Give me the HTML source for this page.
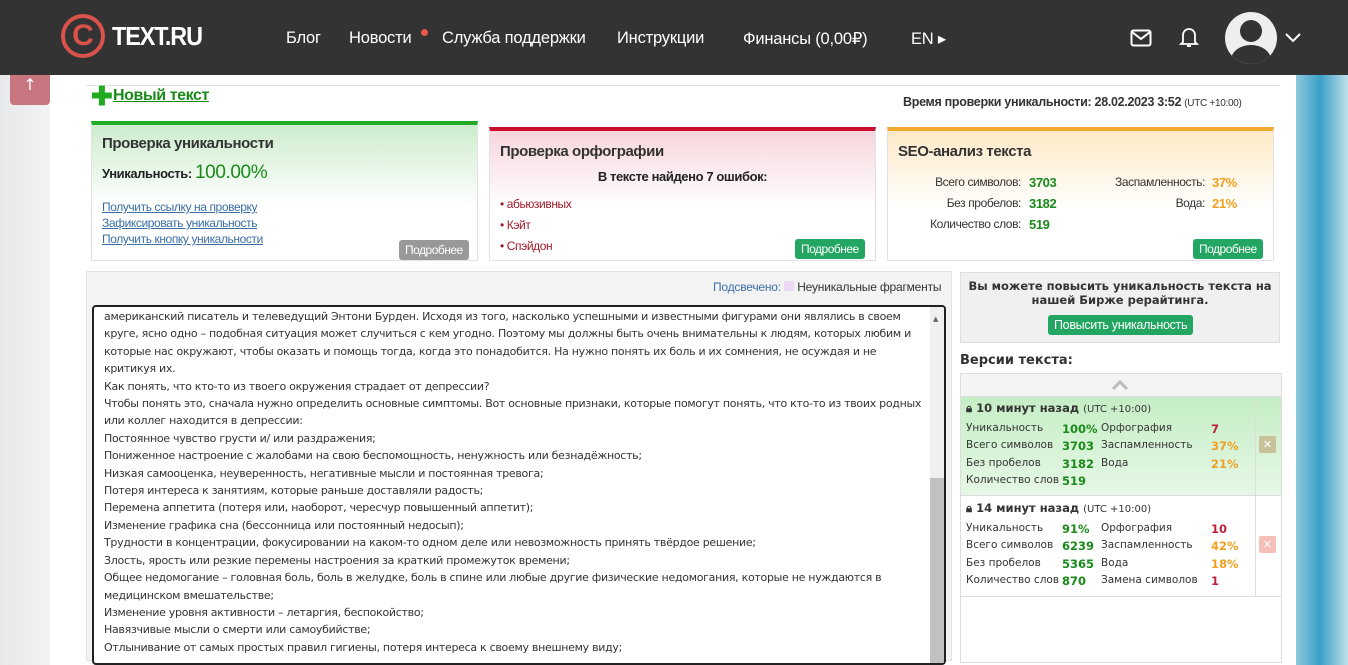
<!DOCTYPE html>
<html><head><meta charset="utf-8"><style>
*{box-sizing:border-box;margin:0;padding:0}
body{width:1348px;height:652px;overflow:hidden;position:relative;font-family:"DejaVu Sans","Liberation Sans",sans-serif;background:linear-gradient(90deg,#e6e8ea 0,#f2f3f4 50px,#fff 50px,#fff 1296px,#8ec8dc 1296px,#3aa0c8 1320px,#bfe0ea 1348px)}
.hdr{position:absolute;left:0;top:0;width:1348px;height:75px;background:#333;color:#fff;font-family:"Liberation Sans",sans-serif}
.hdr .n{position:absolute;top:29px;font-size:16.5px;letter-spacing:-0.2px}
.logo{position:absolute;left:61px;top:14px;width:44px;height:44px;border:4px solid #d9534a;border-radius:50%;color:#d9534a;font:bold 30px/36px "Liberation Sans",sans-serif;text-align:center}
.a{position:absolute}
.nr{font-family:"Liberation Sans",sans-serif;letter-spacing:-0.4px}
.card{position:absolute;top:121px;height:140px;border:1px solid #e2e2e2;font-family:"Liberation Sans",sans-serif}
.btn{position:absolute;background:#22a661;color:#fff;font-size:12px;padding:3px 6px;border-radius:3px;font-family:"Liberation Sans",sans-serif;letter-spacing:-0.5px}
.ta{position:absolute;left:92px;top:305px;width:854px;height:360px;border:2px solid #222;border-radius:4px;font-size:11px;letter-spacing:-0.29px;line-height:17.4px;color:#333;padding:1px 14px 0 10px;overflow:hidden;white-space:nowrap}
.v{position:absolute;font-size:10.5px;color:#333}
.g{color:#1a8a1a;font-weight:bold}.o{color:#f0a020;font-weight:bold}.r{color:#c0203a;font-weight:bold}
</style></head><body>
<div class="hdr">
<div class="logo">C</div>
<div class="a" style="left:112px;top:21px;font:bold 26px 'Liberation Sans',sans-serif;letter-spacing:-1.2px;transform:scaleX(.9);transform-origin:left">TEXT.RU</div>
<div class="n" style="left:286px">Блог</div>
<div class="n" style="left:349px">Новости</div>
<div class="a" style="left:421px;top:29px;width:7px;height:7px;border-radius:50%;background:#e8584a"></div>
<div class="n" style="left:442px">Служба поддержки</div>
<div class="n" style="left:617px">Инструкции</div>
<div class="n" style="left:743px">Финансы (0,00₽)</div>
<div class="n" style="left:911px">EN ▸</div>
<svg class="a" style="left:1130px;top:29px" width="22" height="18" viewBox="0 0 22 18"><rect x="1.5" y="1.5" width="19" height="15" rx="2" fill="none" stroke="#fff" stroke-width="2"/><path d="M2 3l9 7 9-7" fill="none" stroke="#fff" stroke-width="2"/></svg>
<svg class="a" style="left:1179px;top:26px" width="20" height="22" viewBox="0 0 20 22"><path d="M4 16V9a6 6 0 0112 0v7l2 2H2z" fill="none" stroke="#fff" stroke-width="1.8"/><path d="M8 20h4" stroke="#fff" stroke-width="2"/></svg>
<div class="a" style="left:1225px;top:12px;width:52px;height:52px;border-radius:50%;background:#eee;overflow:hidden"><div class="a" style="left:15px;top:8px;width:22px;height:22px;border-radius:50%;background:#333"></div><div class="a" style="left:6px;top:33px;width:40px;height:30px;border-radius:50%;background:#333"></div></div>
<svg class="a" style="left:1285px;top:33px" width="16" height="10"><path d="M1 1l7 7 7-7" fill="none" stroke="#fff" stroke-width="2"/></svg>
</div>
<div class="a" style="left:10px;top:75px;width:40px;height:30px;background:#c97580;color:#fff;text-align:center;font-size:16px;border-radius:0 0 4px 4px">↑</div>
<div class="a" style="left:86px;top:85px;width:1194px;border-top:1px solid #e2e2e2"></div>
<div class="a" style="left:91px;top:85px;color:#1faa1f;font:bold 26px/22px sans-serif">✚</div>
<div class="a nr" style="left:113px;top:87px;color:#1a8a1a;font-weight:bold;font-size:16px;text-decoration:underline">Новый текст</div>
<div class="a nr" style="left:903px;top:95px;font-weight:bold;font-size:12.5px;color:#333;letter-spacing:-0.3px">Время проверки уникальности: 28.02.2023 3:52 <span style="font-weight:normal;font-size:10px">(UTC +10:00)</span></div>

<div class="card" style="left:91px;width:387px;border-top:4px solid #22aa22;background:linear-gradient(#cdeccd,#fff 60%)">
<div class="a nr" style="left:10px;top:10px;font-weight:bold;font-size:15px;color:#333">Проверка уникальности</div>
<div class="a nr" style="left:10px;top:37px;font-weight:bold;font-size:13px;color:#222">Уникальность: <span style="color:#1a8a1a;font-size:19px;font-weight:normal">100.00%</span></div>
<div class="a nr" style="left:10px;top:74px;font-size:12px;line-height:16px;color:#3a6ea5;text-decoration:underline">Получить ссылку на проверку<br>Зафиксировать уникальность<br>Получить кнопку уникальности</div>
<div class="btn" style="left:307px;top:115px;background:#999">Подробнее</div>
</div>
<div class="card" style="left:489px;width:387px;top:127px;height:134px;border-top:4px solid #c8102e;background:linear-gradient(#f7d6dc,#fff 60%)">
<div class="a nr" style="left:10px;top:12px;font-weight:bold;font-size:15px;color:#333">Проверка орфографии</div>
<div class="a nr" style="left:0;width:100%;text-align:center;top:38px;font-weight:bold;font-size:13px;color:#222">В тексте найдено 7 ошибок:</div>
<div class="a nr" style="left:10px;top:63px;font-size:12px;line-height:21px;color:#a01a2a">• абьюзивных<br>• Кэйт<br>• Спэйдон</div>
<div class="btn" style="left:305px;top:108px">Подробнее</div>
</div>
<div class="card" style="left:887px;width:387px;top:127px;height:134px;border-top:4px solid #f0a830;background:linear-gradient(#fde9c6,#fff 60%)">
<div class="a nr" style="left:10px;top:12px;font-weight:bold;font-size:15px;color:#333">SEO-анализ текста</div>
<div class="a nr" style="left:0;width:133px;text-align:right;top:41px;font-size:12px;line-height:21px;color:#333">Всего символов:<br>Без пробелов:<br>Количество слов:</div>
<div class="a g nr" style="left:141px;top:41px;font-size:13px;line-height:21px">3703<br>3182<br>519</div>
<div class="a nr" style="left:180px;width:137px;text-align:right;top:41px;font-size:12px;line-height:21px;color:#333">Заспамленность:<br>Вода:</div>
<div class="a o nr" style="left:324px;top:41px;font-size:13px;line-height:21px">37%<br>21%</div>
<div class="btn" style="left:305px;top:108px">Подробнее</div>
</div>

<div class="a" style="left:86px;top:271px;width:866px;height:390px;background:#f3f3f3;border:1px solid #e2e2e2"></div>
<div class="a nr" style="left:713px;top:280px;font-size:12px;color:#3a6ea5;letter-spacing:-0.2px">Подсвечено: <span style="display:inline-block;width:10px;height:10px;background:#ecd8f2"></span> <span style="color:#333">Неуникальные фрагменты</span></div>
<div class="ta" style="background:#fff">американский писатель и телеведущий Энтони Бурден. Исходя из того, насколько успешными и известными фигурами они являлись в своем<br>круге, ясно одно – подобная ситуация может случиться с кем угодно. Поэтому мы должны быть очень внимательны к людям, которых любим и<br>которые нас окружают, чтобы оказать и помощь тогда, когда это понадобится. На нужно понять их боль и их сомнения, не осуждая и не<br>критикуя их.<br>Как понять, что кто-то из твоего окружения страдает от депрессии?<br>Чтобы понять это, сначала нужно определить основные симптомы. Вот основные признаки, которые помогут понять, что кто-то из твоих родных<br>или коллег находится в депрессии:<br>Постоянное чувство грусти и/ или раздражения;<br>Пониженное настроение с жалобами на свою беспомощность, ненужность или безнадёжность;<br>Низкая самооценка, неуверенность, негативные мысли и постоянная тревога;<br>Потеря интереса к занятиям, которые раньше доставляли радость;<br>Перемена аппетита (потеря или, наоборот, чересчур повышенный аппетит);<br>Изменение графика сна (бессонница или постоянный недосып);<br>Трудности в концентрации, фокусировании на каком-то одном деле или невозможность принять твёрдое решение;<br>Злость, ярость или резкие перемены настроения за краткий промежуток времени;<br>Общее недомогание – головная боль, боль в желудке, боль в спине или любые другие физические недомогания, которые не нуждаются в<br>медицинском вмешательстве;<br>Изменение уровня активности – летаргия, беспокойство;<br>Навязчивые мысли о смерти или самоубийстве;<br>Отлынивание от самых простых правил гигиены, потеря интереса к своему внешнему виду;
<div class="a" style="left:836px;top:0;width:14px;height:360px;background:#f0f0f0"><div class="a" style="left:0;top:171px;width:14px;height:190px;background:#c1c1c1"></div><div class="a" style="left:3px;top:4px;font-size:7px;color:#666">▲</div></div>
</div>

<div class="a" style="left:960px;top:272px;width:320px;height:71px;background:#f0f0f0;border:1px solid #ddd;text-align:center;font:bold 11.5px 'DejaVu Sans',sans-serif;color:#333;padding-top:6px;line-height:14px">Вы можете повысить уникальность текста на<br>нашей Бирже рерайтинга.</div>
<div class="btn" style="left:1048px;top:315px;font-size:12.5px;padding:3px 6px;letter-spacing:-0.3px">Повысить уникальность</div>
<div class="a" style="left:960px;top:353px;font:bold 13px 'DejaVu Sans',sans-serif;color:#333">Версии текста:</div>
<div class="a" style="left:960px;top:373px;width:322px;height:290px;border:1px solid #ddd;background:#fff"></div>
<div class="a" style="left:961px;top:374px;width:320px;height:23px;background:#f4f4f4;border-bottom:1px solid #ddd"></div>
<svg class="a" style="left:1112px;top:380px" width="16" height="10"><path d="M1 9l7-7 7 7" fill="none" stroke="#bbb" stroke-width="3"/></svg>
<div class="a" style="left:961px;top:397px;width:320px;height:99px;background:linear-gradient(#c5eec5,#e6f7e6);border-bottom:1px solid #ddd"></div>
<div class="a" style="left:1255px;top:397px;width:1px;height:200px;background:#ddd"></div>
<div class="a" style="left:961px;top:596px;width:320px;height:1px;background:#ddd"></div>
<div class="v" style="left:966px;top:401px;font-weight:bold;font-size:11.5px">🔒︎ 10 минут назад <span style="font-weight:normal;font-size:10px">(UTC +10:00)</span></div>
<div class="v" style="left:966px;top:420px;line-height:17.3px">Уникальность<br>Всего символов<br>Без пробелов<br>Количество слов</div>
<div class="v g" style="left:1062px;top:421px;line-height:17.3px;font-size:11.5px">100%<br>3703<br>3182<br>519</div>
<div class="v" style="left:1101px;top:420px;line-height:17.3px">Орфография<br>Заспамленность<br>Вода</div>
<div class="v" style="left:1211px;top:421px;line-height:17.3px;font-size:11.5px"><span class="r">7</span><br><span class="o">37%</span><br><span class="o">21%</span></div>
<div class="a" style="left:1259px;top:436px;width:17px;height:17px;background:#c9c19a;color:#fff;font-size:11px;text-align:center;border-radius:2px;line-height:17px">✕</div>
<div class="v" style="left:966px;top:501px;font-weight:bold;font-size:11.5px">🔒︎ 14 минут назад <span style="font-weight:normal;font-size:10px">(UTC +10:00)</span></div>
<div class="v" style="left:966px;top:520px;line-height:17.3px">Уникальность<br>Всего символов<br>Без пробелов<br>Количество слов</div>
<div class="v g" style="left:1062px;top:521px;line-height:17.3px;font-size:11.5px">91%<br>6239<br>5365<br>870</div>
<div class="v" style="left:1101px;top:520px;line-height:17.3px">Орфография<br>Заспамленность<br>Вода<br>Замена символов</div>
<div class="v" style="left:1211px;top:521px;line-height:17.3px;font-size:11.5px"><span class="r">10</span><br><span class="o">42%</span><br><span class="o">18%</span><br><span class="r">1</span></div>
<div class="a" style="left:1259px;top:536px;width:17px;height:17px;background:#f5c0b8;color:#fff;font-size:11px;text-align:center;border-radius:2px;line-height:17px">✕</div>
</body></html>
